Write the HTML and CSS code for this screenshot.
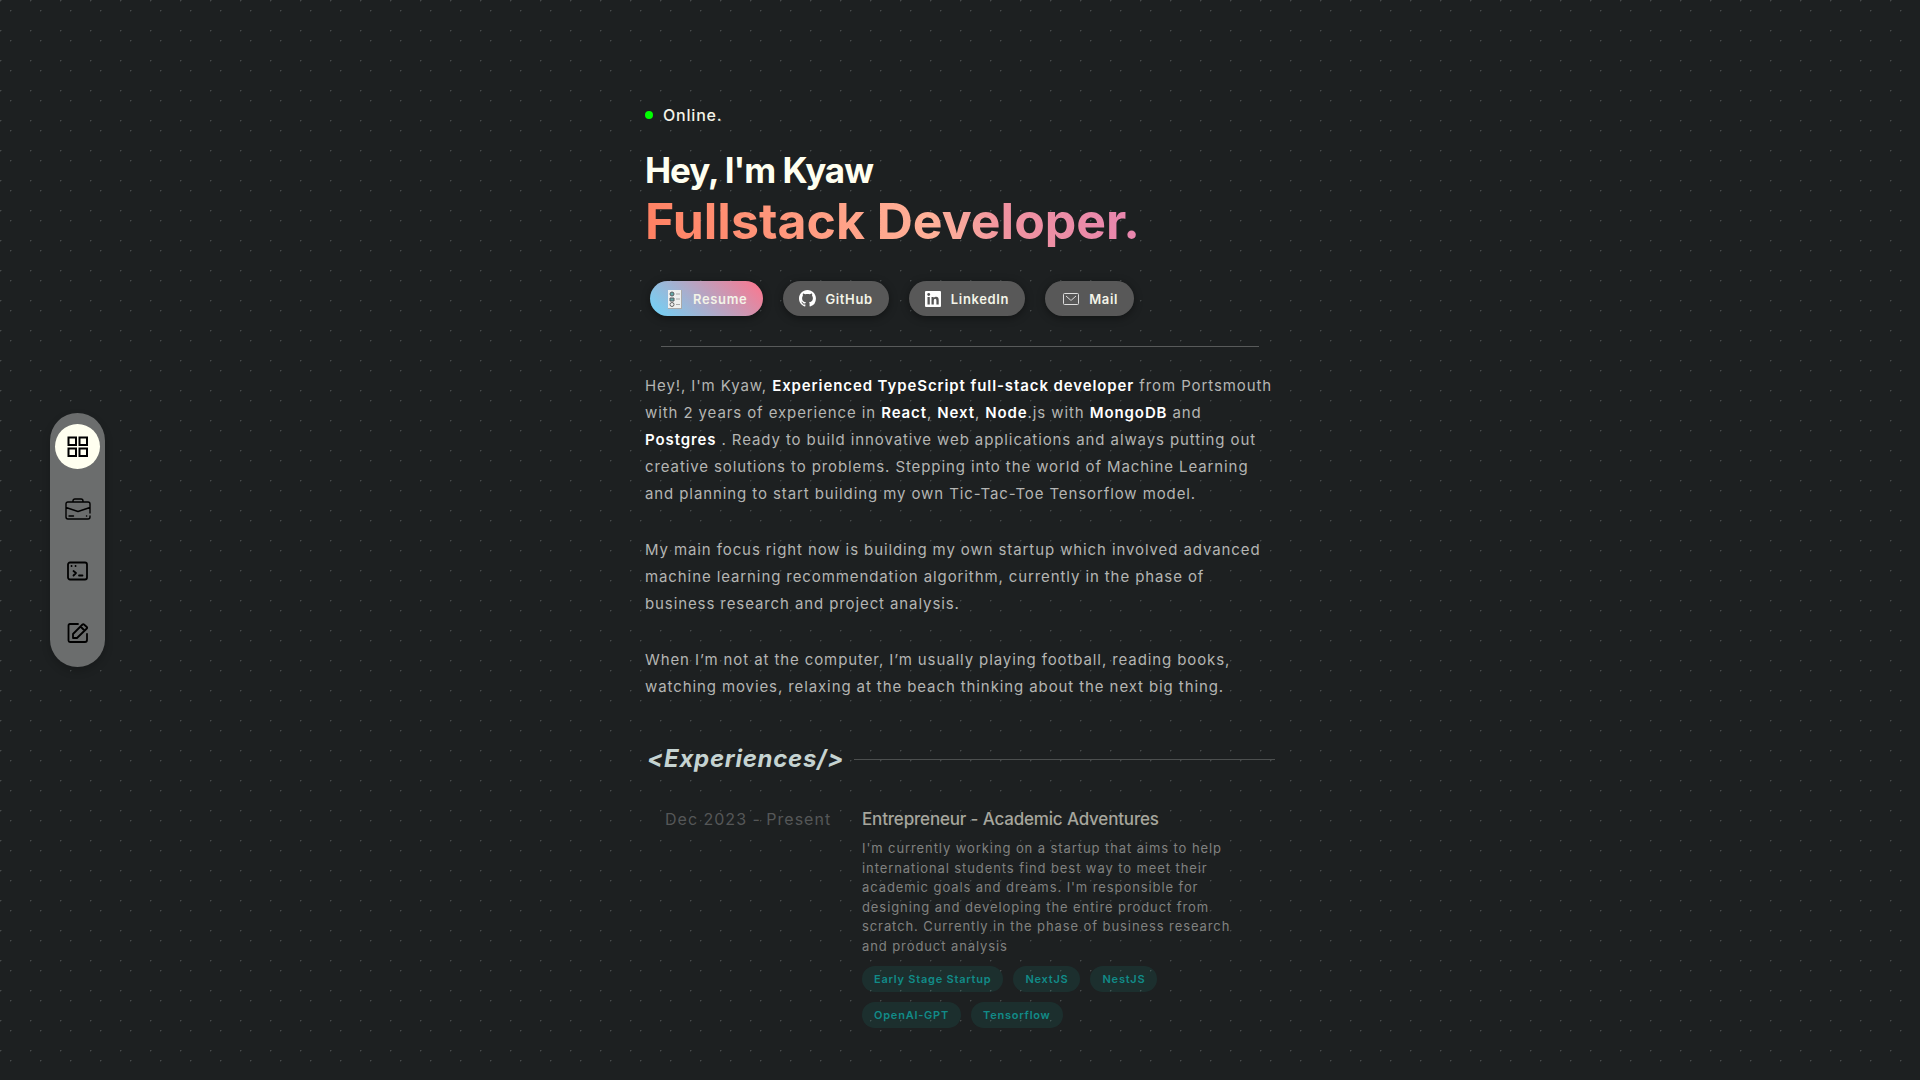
FILE: index.html
```html
<!DOCTYPE html>
<html lang="en">
<head>
<meta charset="utf-8">
<meta name="viewport" content="width=device-width, initial-scale=1">
<title>Kyaw - Fullstack Developer</title>
<link rel="stylesheet" href="styles.css">
</head>
<body>
<nav class="dock" aria-label="Main">
  <a class="dock-link active" href="#home" aria-label="Home">
    <svg width="22" height="22" viewBox="0 0 22 22" fill="none" stroke="#000" stroke-width="2"><path d="M1.500 1.500h7.500v7.500H1.500zM12.500 1.500h7.500v7.500h-7.500zM1.500 12.500h7.500v7.500H1.500zM12.500 12.500h7.500v7.500h-7.500z"/></svg>
  </a>
  <a class="dock-link" href="#experiences" aria-label="Experiences">
    <svg width="26" height="22" viewBox="0 0 26 22" fill="none" stroke="#000" stroke-width="1.4" stroke-linecap="round" stroke-linejoin="round"><path d="M25 15v-9q0-2-2-2H3q-2 0-2 2v13q0 2 2 2h20q2 0 2-2v-1M8 4V3q0-2 2-2h6q2 0 2 2v1M1 9.500l12 4 12-4M4 18h4.500M21.500 18h.2"/></svg>
  </a>
  <a class="dock-link" href="#projects" aria-label="Projects">
    <svg width="22" height="20" viewBox="0 0 22 20" fill="none" stroke="#000" stroke-width="1.800" stroke-linecap="round" stroke-linejoin="round"><rect x="1" y="1.500" width="19" height="17" rx="2"/><path d="M4.500 5h.1M8.500 5h.1M6.500 10l2.500 2-2.500 2.500M12 14.500h3.500"/></svg>
  </a>
  <a class="dock-link" href="#blog" aria-label="Blog">
    <svg width="22" height="22" viewBox="0 0 22 22" fill="none" stroke="#000" stroke-width="1.800" stroke-linecap="round" stroke-linejoin="round"><path d="M11 2H3Q1.500 2 1.500 3.500v15Q1.500 20 3 20H18q2 0 2-2v-6M6 16v-4L15.500 2.500q.8-.8 1.500 0L19.800 5q.8.800 0 1.500L10 16zM13.500 4.500l4 4"/></svg>
  </a>
</nav>
<main class="page" id="home">
  <p class="status"><span class="status-dot"></span>Online.</p>
  <h1 class="intro">Hey, I'm Kyaw<span class="role">Fullstack Developer.</span></h1>
  <div class="links">
    <a class="pill resume" href="#resume">
      <svg width="19" height="20" viewBox="0 0 19 20"><path d="M2 1h14v18H2z" fill="#eff0ef"/><path d="M2 19h14v1H2zM15 1h1v18h-1z" fill="#aaa"/><g fill="#62aaa8" stroke="#5d5d62"><circle cx="6" cy="5" r="2"/><path d="M4 9h4v3H4z"/></g><circle cx="6" cy="15.500" r="2" fill="#eee" stroke="#666"/><path d="M10 5h4M10 10h4M10 15.500h4" stroke="#aaa"/></svg>
      Resume</a>
    <a class="pill" href="#github">
      <svg width="18" height="18" viewBox="0 0 17 17" fill="#fff"><path d="M8 0C3.580 0 0 3.580 0 8c0 3.540 2.290 6.530 5.470 7.590.4.070.55-.17.55-.38 0-.19-.01-.82-.01-1.490-2.010.37-2.530-.49-2.690-.94-.09-.23-.48-.94-.82-1.130-.28-.15-.68-.52-.01-.53.63-.01 1.080.58 1.230.82.72 1.210 1.870.87 2.330.66.07-.52.28-.87.51-1.070-1.780-.2-3.640-.89-3.640-3.950 0-.87.31-1.590.82-2.150-.08-.2-.36-1.020.08-2.120 0 0 .67-.21 2.200.82.64-.18 1.320-.27 2-.27s1.360.09 2 .27c1.530-1.040 2.200-.82 2.200-.82.44 1.100.16 1.920.08 2.120.51.56.82 1.270.82 2.150 0 3.070-1.870 3.750-3.650 3.950.29.25.54.73.54 1.480 0 1.070-.01 1.930-.01 2.200 0 .21.15.46.55.38A8.010 8.010 0 0 0 16 8c0-4.420-3.580-8-8-8z"/></svg>
      GitHub</a>
    <a class="pill" href="#linkedin">
      <svg width="18" height="18" viewBox="1 0 18 18"><rect x="1" y="1" width="16" height="16" rx="1" fill="#fff"/><path d="M3.500 7h2.300v7.500H3.500zM7.500 7h2.200v1q.8-1.200 2.300-1.200 2.700 0 2.700 3.200v4.500h-2.300v-4q0-1.700-1.200-1.700-1.400 0-1.400 1.800v3.900H7.500z" fill="#555"/><circle cx="4.700" cy="4.500" r="1.400" fill="#555"/></svg>
      LinkedIn</a>
    <a class="pill" href="#mail">
      <svg width="20" height="18" viewBox="0 0 20 18" fill="none" stroke="#ddd"><rect x="2.500" y="3.500" width="15" height="11" rx="1"/><path d="M5 6l4.500 4q.5.500 1 0L15 6"/></svg>
      Mail</a>
  </div>
  <hr class="rule">
  <div class="about">
    <p>Hey!, I'm Kyaw, <b>Experienced TypeScript full-stack developer</b> from Portsmouth with 2 years of experience in <b>React</b>, <b>Next</b>, <b>Node</b>.js with <b>MongoDB</b> and <b>Postgres</b> . Ready to build innovative web applications and always putting out creative solutions to problems. Stepping into the world of Machine Learning and planning to start building my own Tic-Tac-Toe Tensorflow model.</p>
    <p>My main focus right now is building my own startup which involved advanced machine learning recommendation algorithm, currently in the phase of business research and project analysis.</p>
    <p>When I’m not at the computer, I’m usually playing football, reading books, watching movies, relaxing at the beach thinking about the next big thing.</p>
  </div>
  <section id="experiences">
    <h2 class="heading">&lt;Experiences/&gt;</h2>
    <article class="job">
      <p class="date">Dec 2023 - Present</p>
      <div class="job-body">
        <h3 class="job-title">Entrepreneur - Academic Adventures</h3>
        <p class="job-text">I'm currently working on a startup that aims to help international students find best way to meet their academic goals and dreams. I'm responsible for designing and developing the entire product from scratch. Currently in the phase of business research and product analysis</p>
        <ul class="tags"><li>Early Stage Startup</li><li>NextJS</li><li>NestJS</li><li>OpenAI-GPT</li><li>Tensorflow</li></ul>
      </div>
    </article>
  </section>
</main>
</body>
</html>
```
FILE: styles.css
```css
* { box-sizing: border-box; margin: 0; padding: 0; }
body {
  background-color: #1d2021;
  background-image:
    radial-gradient(circle at 0 0, #484b4c 1px, transparent 2px),
    radial-gradient(circle at 0 0, #484b4c 1px, transparent 2px);
  background-size: 30px 30px;
  background-position: 0 0, 10px 10px;
  color: #fffff0;
  font-family: Inter, sans-serif;
}
a { color: inherit; text-decoration: none; }
.dock {
  position: fixed;
  left: 50px;
  top: 50%;
  transform: translateY(-50%);
  display: flex;
  flex-direction: column;
  gap: 17px;
  padding: 11px 5px 12px;
  border-radius: 28px;
  background: #6b6d6d;
  box-shadow: 0 4px 8px rgba(0, 0, 0, .2);
}
.dock-link {
  display: flex;
  align-items: center;
  justify-content: center;
  width: 45px;
  height: 45px;
  border-radius: 50%;
}
.dock-link.active { background: #fffff0; }
.page { max-width: 630px; margin: 0 auto; padding: 103px 0 53px; }
.status {
  display: flex;
  align-items: center;
  gap: 10px;
  font-size: 16px;
  font-weight: 500;
  line-height: 24px;
  letter-spacing: .05em;
  color: #f4f4e8;
}
.status-dot { width: 8px; height: 8px; border-radius: 50%; background: #0f0; }
.intro { margin-top: 18px; font-size: 35px; line-height: 50px; letter-spacing: -.03em; }
.role {
  display: block;
  width: fit-content;
  font-size: 50px;
  font-weight: 700;
  line-height: 52px;
  letter-spacing: 0;
  background: linear-gradient(70deg, #ff7f61, #ffb199 58%, #f093a0 72%, #e884b0);
  -webkit-background-clip: text;
  background-clip: text;
  color: transparent;
}
.links { display: flex; gap: 20px; margin-top: 34px; padding-left: 5px; }
.pill {
  display: flex;
  align-items: center;
  gap: 8px;
  height: 35px;
  padding: 0 16px;
  border-radius: 18px;
  background: #585858;
  box-shadow: 0 2px 8px rgba(0, 0, 0, .4);
  font-size: 13px;
  font-weight: 600;
  letter-spacing: .05em;
  color: #f4f4e8;
}
.resume { background: linear-gradient(45deg, #6dd5fa, #ff758c); }
.rule { margin: 30px 16px 0; border: 0; border-top: 1px solid #585a5a; }
.about { display: grid; gap: 29px; margin-top: 25px; }
.about p { font-size: 15px; line-height: 27px; letter-spacing: .06em; color: #b4b5b3; }
.about b { font-weight: 600; color: #fff; }
.heading {
  display: flex;
  align-items: center;
  gap: 10px;
  margin-top: 42px;
  padding-left: 2px;
  font-size: 24px;
  font-style: italic;
  font-weight: 700;
  line-height: 34px;
  letter-spacing: .03em;
  color: #c5d3d1;
}
.heading::after { content: ""; flex: 1; height: 1px; background: #4c4f4f; }
.job { display: grid; grid-template-columns: 197px 1fr; margin-top: 30px; padding-left: 20px; }
.date { font-size: 16px; line-height: 26px; letter-spacing: 1px; color: #555758; }
.job-title { font-size: 17px; font-weight: 500; line-height: 26px; letter-spacing: -.01em; color: #a6a69d; }
.job-text { max-width: 380px; margin-top: 7px; font-size: 13px; line-height: 1.5; letter-spacing: .07em; color: #818280; }
.tags { display: flex; flex-wrap: wrap; gap: 10px; max-width: 340px; margin-top: 10px; list-style: none; }
.tags li {
  padding: 0 12px;
  border-radius: 13px;
  background: rgba(20, 184, 166, .1);
  font-size: 11px;
  font-weight: 600;
  line-height: 26px;
  letter-spacing: .07em;
  color: #118b88;
}
```
